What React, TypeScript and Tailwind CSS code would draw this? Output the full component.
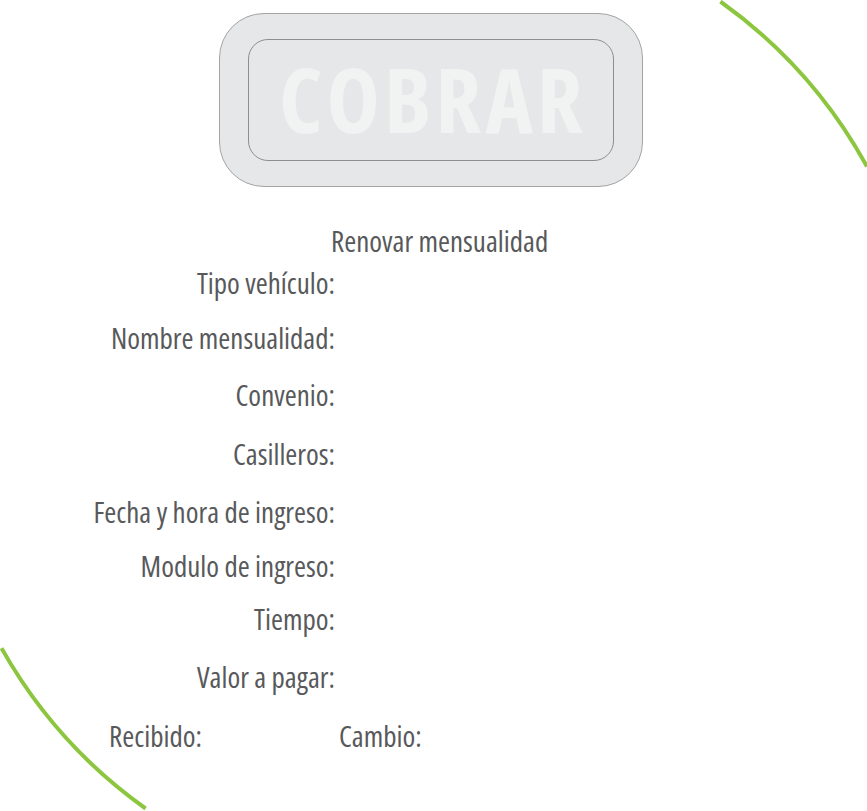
const rows: { label: string; cls: string }[] = [
  { label: "Tipo vehículo:", cls: "mt-[8px]" },
  { label: "Nombre mensualidad:", cls: "mt-[21px]" },
  { label: "Convenio:", cls: "mt-[23px]" },
  { label: "Casilleros:", cls: "mt-[25px]" },
  { label: "Fecha y hora de ingreso:", cls: "mt-[24px]" },
  { label: "Modulo de ingreso:", cls: "mt-[20px]" },
  { label: "Tiempo:", cls: "mt-[19px]" },
  { label: "Valor a pagar:", cls: "mt-[24px]" },
];

export default function App() {
  return (
    <div className="relative w-full h-[811px] overflow-hidden bg-white font-['Open_Sans',sans-serif] [font-stretch:75%] text-[#58595b]">
      <svg
        className="absolute inset-0 pointer-events-none"
        width="867"
        height="811"
        viewBox="0 0 867 811"
        fill="none"
      >
        <path d="M 720.4 1.5 A 495 495 0 0 1 867 166.6" stroke="#8cc63f" strokeWidth="4" />
        <path d="M 1.5 648.2 A 495 495 0 0 0 145.6 808.5" stroke="#8cc63f" strokeWidth="4" />
      </svg>

      <div className="relative flex flex-col pt-[13px]">
        <div className="ml-[219px] w-[424px] h-[174px] rounded-[45px] border border-[#a3a3a3] bg-[#e6e7e8] flex items-center justify-center">
          <div className="w-[366px] h-[122px] rounded-[20px] border border-[#8e8e8e] flex items-center justify-center pb-[5px] pl-[4px]">
            <span className="text-[90px] leading-none font-bold tracking-[4px] text-[#f1f2f2]">
              COBRAR
            </span>
          </div>
        </div>

        <div className="mt-[37px] ml-[331px] text-[29px] leading-[34px]">Renovar mensualidad</div>

        {rows.map((r) => (
          <div key={r.label} className={`${r.cls} flex`}>
            <div className="w-[335px] text-right text-[29px] leading-[34px]">{r.label}</div>
          </div>
        ))}

        <div className="mt-[25px] flex pl-[109px] text-[29px] leading-[34px]">
          <div className="w-[230px]">Recibido:</div>
          <div>Cambio:</div>
        </div>
      </div>
    </div>
  );
}
